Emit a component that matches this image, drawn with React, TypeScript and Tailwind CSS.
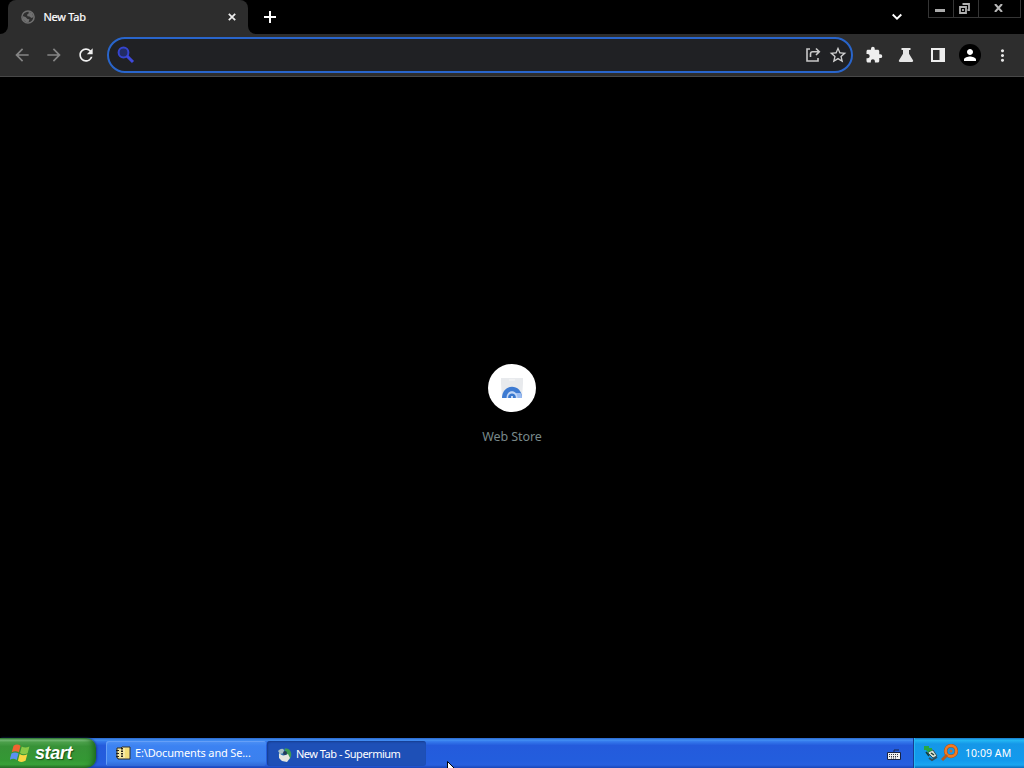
import { MdArrowBack, MdArrowForward, MdExtension, MdMoreVert, MdPerson, MdRefresh, MdStarBorder } from "react-icons/md";

function Globe() {
  return (
    <svg className="ml-[13px] shrink-0" width="14" height="14" viewBox="0 0 14 14">
      <circle cx="7" cy="7" r="6.1" fill="#303030" stroke="#707070" strokeWidth="1.5" />
      <path d="M7 1.5 11 3l1.5 4-2 1-2-1.5-2-.3L6 4.8 8 3zM1.5 6l3 1 2 2 2 .3-1 3L5 12 2 9.5z" fill="#707070" />
    </svg>
  );
}

function TabStrip() {
  return (
    <div className="flex h-[34px] bg-black">
      <div className="flex w-2 items-end bg-[#2d2d2d]">
        <div className="h-full w-2 rounded-br-lg bg-black"></div>
      </div>
      <div className="bg-black">
        <div className="flex h-[34px] w-60 items-center rounded-t-lg bg-[#2d2d2d]">
          <Globe />
          <span className="ml-[8.5px] text-[11px] tracking-[-0.25px] whitespace-nowrap text-white [-webkit-text-stroke:0.2px_white]">New Tab</span>
          <svg className="mr-3 ml-auto" width="8" height="8" viewBox="0 0 8 8">
            <path d="M.8.8l6.4 6.4M7.2.8.8 7.2" stroke="#eee" strokeWidth="1.7" />
          </svg>
        </div>
      </div>
      <div className="w-2 bg-[#2d2d2d]">
        <div className="h-full w-2 rounded-bl-lg bg-black"></div>
      </div>
      <svg className="mt-[11px] ml-2" width="12" height="12" viewBox="0 0 12 12">
        <path d="M6 0v12M0 6h12" stroke="#fff" strokeWidth="2" />
      </svg>
      <svg className="mt-[13px] mr-[26px] ml-auto" width="10" height="8" viewBox="0 0 10 8">
        <path d="m.7 1.5 4.3 4.2 4.3-4.2" fill="none" stroke="#fff" strokeWidth="1.9" />
      </svg>
      <div className="mr-[3px] flex h-[18px] w-[93px] border border-t-0 border-[#353535]">
        <div className="flex w-[25px] justify-center border-r border-[#353535]">
          <svg className="mt-[9px] -ml-0.5" width="10" height="3">
            <path d="M0 1.5h10" stroke="#aaa" strokeWidth="3" />
          </svg>
        </div>
        <div className="flex w-[25px] justify-center border-r border-[#353535]">
          <svg className="mt-[3px] -ml-1" width="11" height="11" viewBox="0 0 11 11">
            <path d="M3.500 1h6.500v6H8.500M1 4h6v6H1zM4 6v2" fill="none" stroke="#b0b0b0" strokeWidth="1.8" />
          </svg>
        </div>
        <div className="flex grow justify-center">
          <svg className="mt-[4px] -ml-[3px]" width="9" height="8" viewBox="0 0 9 8">
            <path d="m1 0 7 8M8 0 1 8" stroke="#b8b8b8" strokeWidth="2" />
          </svg>
        </div>
      </div>
    </div>
  );
}

function Toolbar() {
  return (
    <div className="flex h-[43px] items-center border-b border-[#484848] bg-[#2d2d2d] pl-3">
      <div className="flex w-[95px] items-center gap-3">
        <MdArrowBack className="size-5 shrink-0 text-[#858585]" />
        <MdArrowForward className="size-5 shrink-0 text-[#858585]" />
        <MdRefresh className="size-5 shrink-0 text-[#f0f0f0]" />
      </div>
      <div className="flex h-9 w-[746px] shrink-0 items-center rounded-full border-2 border-[#2965cb] bg-[#202124] pr-[4px] pl-2">
        <svg width="18" height="18" viewBox="0 0 18 18">
          <circle cx="6.500" cy="6.500" r="4.900" fill="#222c65" stroke="#3545cf" strokeWidth="2" />
          <path d="m10 10 6 6" stroke="#3f49dc" strokeWidth="3" />
        </svg>
        <svg className="mr-[7px] ml-auto" width="16" height="16" viewBox="0 0 16 16">
          <path d="M5 2H2v12h11v-3M5.500 10V7c0-1.500.7-2.200 2.200-2.200H14M11 1.500l3.300 3.300L11 8" fill="none" stroke="#c8c8c8" strokeWidth="1.600" />
        </svg>
        <MdStarBorder className="-mr-px size-5 text-[#d0d0d0]" />
      </div>
      <div className="ml-3 flex items-center">
        <MdExtension className="size-[18px] text-[#eee]" />
        <svg className="ml-[15px]" width="16" height="16" viewBox="0 0 16 16">
          <path d="M3.500 1h9v2H11v3.700l4 6.600c.5 1-.1 1.700-1 1.700H2c-.9 0-1.500-.7-1-1.700l4-6.600V3H3.500z" fill="#e6e6e6" />
        </svg>
        <svg className="ml-4" width="16" height="16" viewBox="0 0 16 16">
          <path fillRule="evenodd" d="M1 1h14v14H1zM3 3v10h6.500V3z" fill="#eee" />
        </svg>
        <div className="ml-[13px] flex size-[22px] items-center justify-center rounded-full bg-black">
          <MdPerson className="size-[18px] text-white" />
        </div>
        <MdMoreVert className="ml-3 size-[19px] text-[#e6e6e6]" />
      </div>
    </div>
  );
}

function NewTabPage() {
  return (
    <div className="flex h-[661px] flex-col items-center bg-black pt-[287px]">
      <div className="flex size-12 items-center justify-center rounded-full bg-white">
        <svg width="22" height="22" viewBox="0 0 22 22">
          <path d="M0 1h22v5l-1 15H1L0 6z" fill="#e8eaed" />
          <path d="M8 3h6" stroke="#f3f3f3" strokeWidth="1.5" />
          <path d="M1 21c0-15 20-15 20 0z" fill="#3e7bd2" />
          <path d="M15 16h4.500c1 1.500 1.500 3 1.500 5h-6z" fill="#9bbcf1" />
          <path d="M5.500 21c0-9 11-9 11 0z" fill="#c2d7f7" />
          <path d="M7.200 21c-.7-6 8.300-6 7.600 0z" fill="#3978cf" />
          <path d="M10 21v-2h2v2" fill="#c2d7f7" />
        </svg>
      </div>
      <span className="mt-[15px] text-[12.5px] leading-5 tracking-[-0.1px] text-[#78898a]">Web Store</span>
    </div>
  );
}

function WindowsFlag() {
  return (
    <svg width="20" height="19" viewBox="1 1 17 16">
      <path d="M4 2.500c2-1.500 4-1.500 6 0L8.500 8C6.500 6.700 4.500 6.700 2.500 8z" fill="#f06431" />
      <path d="M11 3c2 1.300 4 1.300 6.500 0L16 8.700c-2.300 1.200-4.500 1.100-6.500-.2z" fill="#89c947" />
      <path d="M2.200 9c2-1.200 4-1.200 6 0l-1.500 5.500c-2-1.300-4-1.300-6 0z" fill="#5b91f1" />
      <path d="M9.200 9.500c2.200 1.400 4.300 1.400 6.500.1l-1.500 5.600c-2.200 1.300-4.400 1.200-6.500-.1z" fill="#f8d642" />
    </svg>
  );
}

function Taskbar() {
  return (
    <div className="flex h-[30px] bg-[linear-gradient(#2865cb_0,#4390f3_7%,#3479ec_12%,#245bdc_25%,#235ddd_70%,#2860df_90%,#1a45b7_100%)] text-[11px] text-white">
      <div className="flex w-24 items-center rounded-r-[10px] bg-[linear-gradient(#2c7630_0,#78bd78_7%,#4ca04b_14%,#379237_28%,#349834_75%,#39a239_88%,#286e29_100%)] pl-2.5 shadow-[inset_-5px_0_6px_-3px_#176017,1px_0_2px_#1b3b91]">
        <WindowsFlag />
        <span className="ml-[5px] font-['Liberation_Sans',sans-serif] text-[18px] leading-6 font-bold tracking-[-0.4px] italic [text-shadow:1px_1px_1px_#174d17]">start</span>
      </div>
      <div className="mt-[3px] ml-2.5 flex h-[25px] w-40 items-center rounded-[3px] bg-[linear-gradient(#4d91f5,#3c82f2_20%,#3b80ee_80%,#3069d6)] pl-[9px] shadow-[inset_1px_1px_#659ff7]">
        <svg className="-mt-0.5" width="16" height="14" viewBox="0 0 16 14">
          <path d="M2 2h4l1-1h8v12H3v-1H2z" fill="#f7eaa5" stroke="#302d20" />
          <path d="M10 2h4v10h-4z" fill="#f4df78" />
          <path d="M7 2v10" stroke="#27231a" strokeWidth="2" strokeDasharray="1.500 1" />
          <path d="M1 4.500h3M1 7.500h3M1 10.500h3" stroke="#27231a" />
        </svg>
        <span className="ml-1 tracking-[-0.15px] whitespace-nowrap">E:\Documents and Se...</span>
      </div>
      <div className="mt-[3px] ml-px flex h-[25px] w-[159px] items-center rounded-[3px] bg-[#1e50b7] pt-0.5 pl-2.5 shadow-[inset_1px_1px_2px_#163c8e]">
        <svg width="16" height="16" viewBox="0 0 16 16">
          <circle cx="8" cy="8" r="6.500" fill="#2a6caa" />
          <path d="M8 1.500c6-1 7.500 6 5 10L9 14c2-5 2-7-1-8z" fill="#3d9b52" />
          <path d="M2 6c3 3 5 3 9 1l2 4-3 4-5-1-3-3z" fill="#e6e6e0" />
          <path d="M1 4c4-4 7-2 6 2L3 7z" fill="#a7bfc7" />
          <circle cx="8" cy="6" r="2" fill="#253b5a" />
        </svg>
        <span className="ml-[3px] tracking-[-0.5px] whitespace-nowrap">New Tab - Supermium</span>
      </div>
      <svg className="mt-[11px] ml-auto" width="14" height="11" viewBox="0 0 14 11">
        <path d="M7 3V1h5" fill="none" stroke="#172344" />
        <path d="M.5 3.500h13v7H.5z" fill="#eee" stroke="#172344" />
        <path d="M2 5.500h10M2 7.500h10M4 9h6" stroke="#303540" strokeDasharray="1 1" />
      </svg>
      <div className="ml-[12px] flex w-[111px] items-center border-l border-[#173c91] bg-[linear-gradient(#1777c9_0,#24b8f4_7%,#1597e8_20%,#129aed_75%,#19a6f1_90%,#0a6bbb_100%)] pl-[9px] shadow-[inset_1px_0_#25b7f2]">
        <svg width="16" height="18" viewBox="0 0 16 18">
          <path d="m5 9 5 5 4-2-4-6-5 2z" fill="#d7e0d3" stroke="#32505b" />
          <path d="m6 14 3 2 5-3" fill="none" stroke="#31505b" strokeWidth="2" />
          <path d="M1 2h5v2h3v3H6v2L3 6H1z" fill="#25a842" />
          <path d="m3 8 3 4M8 9l3 2" stroke="#183c35" strokeWidth="1.500" />
        </svg>
        <svg className="ml-[2px]" width="17" height="18" viewBox="0 0 17 18">
          <circle cx="10" cy="7" r="5.400" fill="none" stroke="#995125" strokeWidth="3.600" />
          <circle cx="10" cy="7" r="5.400" fill="none" stroke="#f37a20" strokeWidth="2.600" />
          <path d="m6 11-5 5" stroke="#b55b1e" strokeWidth="3" />
          <circle cx="10" cy="7" r="1.500" fill="#d86a22" />
        </svg>
        <span className="mt-px ml-[7px] text-[10.5px] tracking-[0.05px] whitespace-nowrap">10:09 AM</span>
      </div>
    </div>
  );
}

function App() {
  return (
    <div className="relative h-[768px] w-[1024px] overflow-hidden bg-black font-['Noto_Sans','DejaVu_Sans',sans-serif]">
      <TabStrip />
      <Toolbar />
      <NewTabPage />
      <Taskbar />
      {/* mouse pointer */}
      <svg className="absolute top-[761px] left-[447px]" width="12" height="19" viewBox="0 0 12 19">
        <path d="M.5.5v16l4-4 3 6 2-1-3-6h5z" fill="#fff" stroke="#000" />
      </svg>
    </div>
  );
}

export default App;
